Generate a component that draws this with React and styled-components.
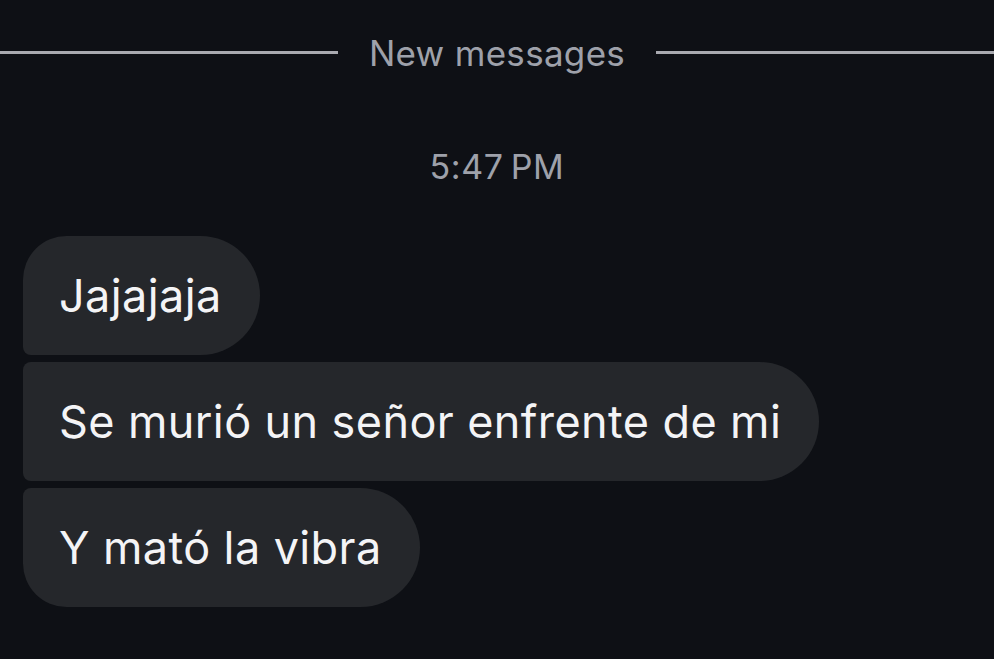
import React from 'react'
import styled, { createGlobalStyle } from 'styled-components'

const GlobalStyle = createGlobalStyle`
  html, body {
    margin: 0;
    padding: 0;
    background: #0e1015;
  }
  body {
    font-family: Inter, "Noto Sans", sans-serif;
    -webkit-font-smoothing: antialiased;
  }
`

const Screen = styled.div`
  width: 994px;
  height: 659px;
  overflow: hidden;
  background: #0e1015;
  display: flex;
  flex-direction: column;
  padding-top: 30px;
  box-sizing: border-box;
`

const Divider = styled.div`
  display: flex;
  align-items: center;
  gap: 31px;
  height: 44px;
`

const Rule = styled.div`
  flex: 1;
  height: 3px;
  background: #a9aab0;
`

const DividerLabel = styled.span`
  font-size: 35px;
  line-height: 44px;
  color: #9ea1aa;
  letter-spacing: 0.3px;
  transform: translateY(1px);
`

const Time = styled.div`
  margin-top: 73px;
  text-align: center;
  font-size: 34px;
  line-height: 40px;
  color: #9ea1aa;
  letter-spacing: 0.6px;
  word-spacing: -3px;
`

const Thread = styled.div`
  margin-top: 49px;
  padding-left: 23px;
  display: flex;
  flex-direction: column;
  align-items: flex-start;
  gap: 7px;
`

const radius = {
  first: '44px 60px 60px 8px',
  middle: '8px 60px 60px 8px',
  last: '8px 60px 60px 44px',
}

const Bubble = styled.div`
  height: 119px;
  box-sizing: border-box;
  padding: 0 38px 0 36px;
  display: flex;
  align-items: center;
  background: #25272b;
  color: #f4f4f6;
  font-size: 45px;
  letter-spacing: 0.4px;
  border-radius: ${p => radius[p.$pos]};
`

const messages = [
  'Jajajaja',
  'Se murió un señor enfrente de mi',
  'Y mató la vibra',
]

export default function App() {
  return (
    <Screen>
      <GlobalStyle />
      <Divider>
        <Rule />
        <DividerLabel>New messages</DividerLabel>
        <Rule />
      </Divider>
      <Time>5:47 PM</Time>
      <Thread>
        {messages.map((m, i) => (
          <Bubble
            key={i}
            $pos={i === 0 ? 'first' : i === messages.length - 1 ? 'last' : 'middle'}
          >
            {m}
          </Bubble>
        ))}
      </Thread>
    </Screen>
  )
}
